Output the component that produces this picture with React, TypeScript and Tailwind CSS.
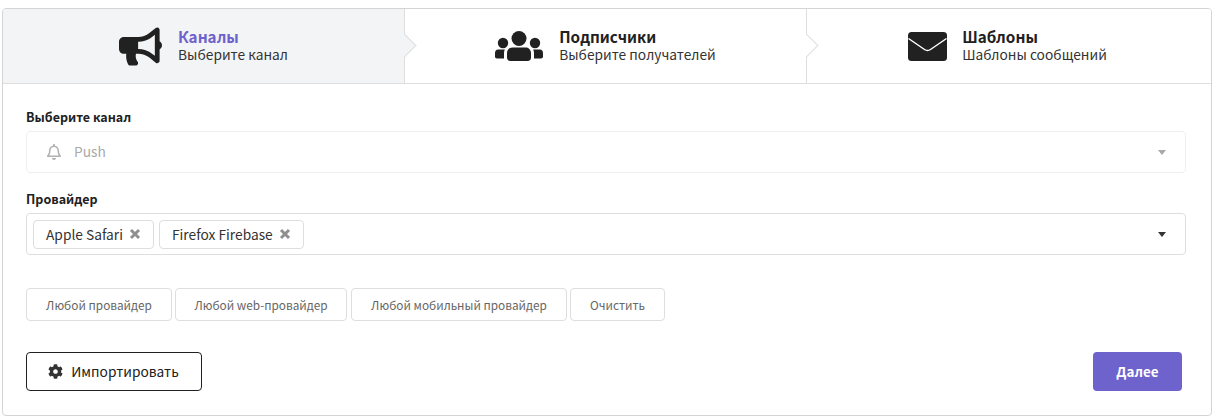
import { FaBullhorn, FaCog, FaRegBell } from 'react-icons/fa';
import type { ReactNode } from 'react';

const font = 'font-["Noto_Sans_CJK_SC","Noto_Sans",sans-serif]';

function UsersIcon() {
  return (
    <svg viewBox="0 0 48 30" className="mr-[16px] h-[30px] w-[48px] fill-[#212121]">
      <circle cx="24" cy="7.5" r="7.5" />
      <circle cx="8" cy="12" r="5.2" />
      <circle cx="40" cy="12" r="5.2" />
      <path d="M12 22c0-3.6 2.6-5.6 5.5-5.6h13c2.900 0 5.500 2 5.500 5.600v4.500c0 2-1.300 3.500-3.300 3.500h-17.400c-2 0-3.300-1.500-3.300-3.500z" />
      <path d="M3 18.500h6.800c-.5 1-.8 2.200-.8 3.500v5.500h-7c-1.200 0-2-.8-2-2v-3.500c0-2 1.300-3.500 3-3.500z" />
      <path d="M45 18.500h-6.800c.5 1 .8 2.200.8 3.500v5.500h7c1.200 0 2-.8 2-2v-3.500c0-2-1.300-3.500-3-3.500z" />
    </svg>
  );
}

function MailIcon() {
  return (
    <svg viewBox="0 0 39 29" className="mr-[15px] h-[29px] w-[39px]">
      <rect width="39" height="29" rx="3.500" className="fill-[#212121]" />
      <path d="M0.500 6.500L16.500 17.500Q19.500 19.500 22.500 17.500L38.500 6.500" className="fill-none stroke-white stroke-[1.500px]" />
    </svg>
  );
}

function Step({ icon, title, desc, active, last, className }: { icon: ReactNode; title: string; desc: string; active?: boolean; last?: boolean; className: string }) {
  return (
    <div className={`relative flex items-center justify-center ${className} ${active ? 'bg-[#f3f4f5]' : 'bg-white'} ${last ? '' : 'border-r border-[#dedede]'}`}>
      {icon}
      <div className="mb-[2px] flex flex-col">
        <span className={`text-[15.25px] leading-[19px] font-bold ${active ? 'text-[#6e62cc]' : 'text-[#212121]'}`}>{title}</span>
        <span className="text-[13.75px] leading-[17px] text-[#333]">{desc}</span>
      </div>
      {!last && (
        <span className={`absolute right-[-9px] top-[28px] z-10 h-[17px] w-[17px] rotate-45 border-t border-r border-[#dedede] ${active ? 'bg-[#f3f4f5]' : 'bg-white'}`} />
      )}
    </div>
  );
}

function Chip({ label }: { label: string }) {
  return (
    <span className="flex h-[29px] items-center rounded-[4px] border border-[#dedede] px-[12px] text-[13.75px] text-[#333]">
      {label}
      <svg viewBox="0 0 12 12" className="ml-[6px] h-[12px] w-[12px] stroke-[#8f8f8f] stroke-[3px]">
        <path d="M2 2L10 10M10 2L2 10" />
      </svg>
    </span>
  );
}

function Preset({ label, className }: { label: string; className: string }) {
  return (
    <button className={`flex h-[33px] items-center justify-center rounded-[4px] border border-[#dedede] bg-white text-[11.8px] text-[#666] ${className}`}>
      {label}
    </button>
  );
}

export default function App() {
  return (
    <div className={`h-[420px] w-[1214px] bg-white pl-[2px] pr-[2px] pt-[8px] ${font}`}>
      <div className="h-[408px] w-[1210px] overflow-hidden rounded-[4px] border border-[#d4d4d5]">
        <div className="flex h-[75px] border-b border-[#dedede]">
          <Step
            className="w-[402px]"
            active
            icon={<FaBullhorn className="mr-[16px] mt-[1px] text-[43px] text-[#212121]" />}
            title="Каналы"
            desc="Выберите канал"
          />
          <Step className="w-[402px]" icon={<UsersIcon />} title="Подписчики" desc="Выберите получателей" />
          <Step className="flex-1 pr-[3px]" last icon={<MailIcon />} title="Шаблоны" desc="Шаблоны сообщений" />
        </div>
        <div className="px-[23px] pt-[24px]">
          <label className="block text-[12.5px] leading-[18px] font-bold text-[#212121]">Выберите канал</label>
          <div className="mt-[5px] flex h-[42px] w-[1160px] items-center rounded-[4px] border border-[#efefef] pl-[19px] pr-[19px] text-[13.75px] text-[#aaa]">
            <FaRegBell className="text-[16px] text-[#b0b0b0]" />
            <span className="ml-[12px] mb-[2px]">Push</span>
            <span className="ml-auto h-0 w-0 border-x-[4px] border-t-[5px] border-x-transparent border-t-[#a8a8a8]" />
          </div>
          <label className="mt-[17px] block text-[12.5px] leading-[18px] font-bold text-[#212121]">Провайдер</label>
          <div className="mt-[5px] flex h-[42px] w-[1160px] items-center gap-[5px] rounded-[4px] border border-[#dedede] pl-[6px] pr-[19px]">
            <Chip label="Apple Safari" />
            <Chip label="Firefox Firebase" />
            <span className="ml-auto h-0 w-0 border-x-[4px] border-t-[5px] border-x-transparent border-t-[#333]" />
          </div>
          <div className="mt-[33px] flex gap-[3px]">
            <Preset className="w-[146px]" label="Любой провайдер" />
            <Preset className="w-[172px]" label="Любой web-провайдер" />
            <Preset className="ml-[1px] w-[216px]" label="Любой мобильный провайдер" />
            <Preset className="w-[95px]" label="Очистить" />
          </div>
          <div className="mt-[31px] flex items-center justify-between">
            <button className="flex h-[39px] w-[176px] items-center justify-center rounded-[4px] border border-[#212121] bg-white pr-[1px] text-[13.75px] text-[#212121]">
              <FaCog className="mr-[8px] text-[15px] text-[#333]" />
              Импортировать
            </button>
            <button className="mr-[6px] flex h-[39px] w-[89px] items-center justify-center rounded-[4px] bg-[#6e62cc] text-[13.4px] font-bold text-white">
              Далее
            </button>
          </div>
        </div>
      </div>
    </div>
  );
}
